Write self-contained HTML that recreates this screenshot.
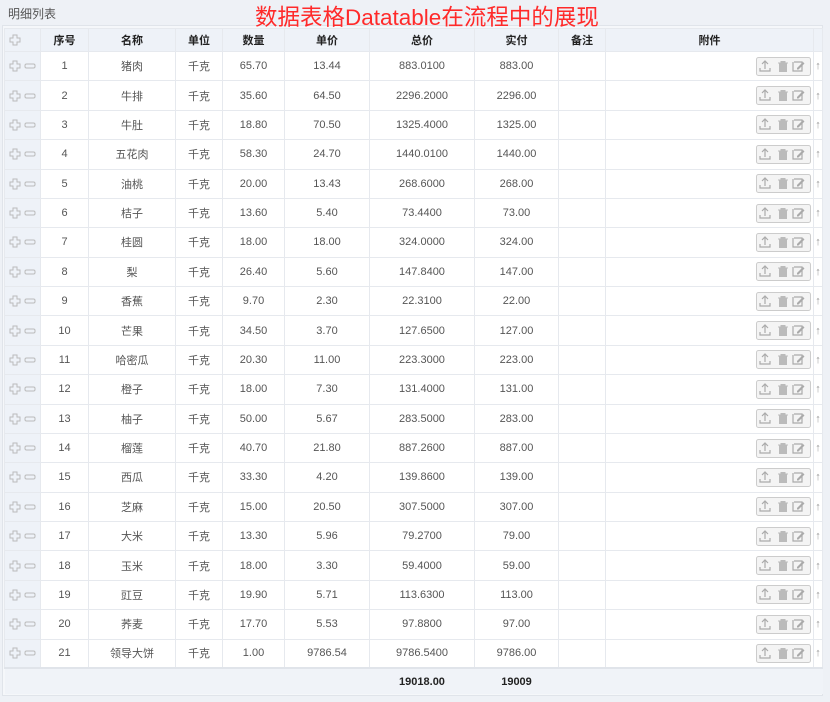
<!DOCTYPE html>
<html><head><meta charset="utf-8">
<style>
*{box-sizing:border-box;margin:0;padding:0}
body{width:830px;height:702px;background:#eef1f6;font-family:"Liberation Sans","Noto Sans CJK SC",sans-serif;position:relative;overflow:hidden}
.tt{position:absolute;left:8px;top:5px;font-size:12px;color:#555}
.red{position:absolute;left:255px;top:4px;font-size:22.5px;color:#ff2a2a;line-height:28px;z-index:2}
.wrap{position:absolute;left:2px;top:25px;width:821px;height:671px;background:#f5f7fa;border:1px solid #e0e4ea}
table{position:absolute;left:1px;top:2px;border-collapse:collapse;table-layout:fixed;width:818px}
td,th{border:1px solid #e6e9ee;text-align:center;font-size:11px;color:#555;white-space:nowrap;overflow:hidden}
th{height:23px;background:#eef2f8;color:#222;font-weight:bold}
tbody tr{height:29.38px;background:#fff}
td.c0{background:#eef2f8;text-align:left;padding-left:4px}
td.last{border-left:1px solid #e6e9ee;color:#999;font-size:11px}
tfoot td{height:26px;background:#f0f3f8;border:none;border-top:2px solid #e0e4ea;font-weight:bold;color:#222}
.pm{display:inline-block;vertical-align:middle}
.b{float:right;margin-right:2px}
</style></head><body>
<svg width="0" height="0" style="position:absolute">
<defs>
<g id="plus"><path d="M4 1h4v3h3v4h-3v3h-4v-3h-3v-4h3z" fill="none" stroke="#bbb" stroke-width="1"/></g>
<g id="minus"><rect x="1" y="4" width="10" height="4" rx="1.5" fill="none" stroke="#bbb"/></g>
<g id="btns">
<rect x="0.5" y="0.5" width="54" height="18" rx="2" fill="#f4f4f4" stroke="#ccc"/>
<path d="M9 4v8M6 7l3-3 3 3M4 11v3h10v-3" fill="none" stroke="#aaa" stroke-width="1.2"/>
<path d="M22 6h10M25 6v-1.5h4v1.5M23.5 7h7v7.5h-7z" fill="#bbb" stroke="#bbb" stroke-width="1"/>
<path d="M38 5h8v9h-9v-9" fill="none" stroke="#aaa" stroke-width="1.2"/>
<path d="M41 11l6-6 1.5 1.5-6 6h-1.5z" fill="#aaa"/>
</g>
</defs></svg>
<div class="tt">明细列表</div>
<div class="red">数据表格Datatable在流程中的展现</div>
<div class="wrap">
<table>
<colgroup><col style="width:36px"><col style="width:48px"><col style="width:87px"><col style="width:47px"><col style="width:62px"><col style="width:85px"><col style="width:105px"><col style="width:84px"><col style="width:47px"><col style="width:208px"><col style="width:9px"></colgroup>
<thead><tr><th style="text-align:left;padding-left:4px"><svg class="pm" width="12" height="12"><use href="#plus"/></svg></th><th>序号</th><th>名称</th><th>单位</th><th>数量</th><th>单价</th><th>总价</th><th>实付</th><th>备注</th><th>附件</th><th></th></tr></thead>
<tbody>
<tr><td class="c0"><svg class="pm" width="12" height="12"><use href="#plus"/></svg> <svg class="pm" width="12" height="12"><use href="#minus"/></svg></td><td>1</td><td>猪肉</td><td>千克</td><td>65.70</td><td>13.44</td><td>883.0100</td><td>883.00</td><td></td><td><svg class="b" width="55" height="19"><use href="#btns"/></svg></td><td class="last">↑</td></tr>
<tr><td class="c0"><svg class="pm" width="12" height="12"><use href="#plus"/></svg> <svg class="pm" width="12" height="12"><use href="#minus"/></svg></td><td>2</td><td>牛排</td><td>千克</td><td>35.60</td><td>64.50</td><td>2296.2000</td><td>2296.00</td><td></td><td><svg class="b" width="55" height="19"><use href="#btns"/></svg></td><td class="last">↑</td></tr>
<tr><td class="c0"><svg class="pm" width="12" height="12"><use href="#plus"/></svg> <svg class="pm" width="12" height="12"><use href="#minus"/></svg></td><td>3</td><td>牛肚</td><td>千克</td><td>18.80</td><td>70.50</td><td>1325.4000</td><td>1325.00</td><td></td><td><svg class="b" width="55" height="19"><use href="#btns"/></svg></td><td class="last">↑</td></tr>
<tr><td class="c0"><svg class="pm" width="12" height="12"><use href="#plus"/></svg> <svg class="pm" width="12" height="12"><use href="#minus"/></svg></td><td>4</td><td>五花肉</td><td>千克</td><td>58.30</td><td>24.70</td><td>1440.0100</td><td>1440.00</td><td></td><td><svg class="b" width="55" height="19"><use href="#btns"/></svg></td><td class="last">↑</td></tr>
<tr><td class="c0"><svg class="pm" width="12" height="12"><use href="#plus"/></svg> <svg class="pm" width="12" height="12"><use href="#minus"/></svg></td><td>5</td><td>油桃</td><td>千克</td><td>20.00</td><td>13.43</td><td>268.6000</td><td>268.00</td><td></td><td><svg class="b" width="55" height="19"><use href="#btns"/></svg></td><td class="last">↑</td></tr>
<tr><td class="c0"><svg class="pm" width="12" height="12"><use href="#plus"/></svg> <svg class="pm" width="12" height="12"><use href="#minus"/></svg></td><td>6</td><td>桔子</td><td>千克</td><td>13.60</td><td>5.40</td><td>73.4400</td><td>73.00</td><td></td><td><svg class="b" width="55" height="19"><use href="#btns"/></svg></td><td class="last">↑</td></tr>
<tr><td class="c0"><svg class="pm" width="12" height="12"><use href="#plus"/></svg> <svg class="pm" width="12" height="12"><use href="#minus"/></svg></td><td>7</td><td>桂圆</td><td>千克</td><td>18.00</td><td>18.00</td><td>324.0000</td><td>324.00</td><td></td><td><svg class="b" width="55" height="19"><use href="#btns"/></svg></td><td class="last">↑</td></tr>
<tr><td class="c0"><svg class="pm" width="12" height="12"><use href="#plus"/></svg> <svg class="pm" width="12" height="12"><use href="#minus"/></svg></td><td>8</td><td>梨</td><td>千克</td><td>26.40</td><td>5.60</td><td>147.8400</td><td>147.00</td><td></td><td><svg class="b" width="55" height="19"><use href="#btns"/></svg></td><td class="last">↑</td></tr>
<tr><td class="c0"><svg class="pm" width="12" height="12"><use href="#plus"/></svg> <svg class="pm" width="12" height="12"><use href="#minus"/></svg></td><td>9</td><td>香蕉</td><td>千克</td><td>9.70</td><td>2.30</td><td>22.3100</td><td>22.00</td><td></td><td><svg class="b" width="55" height="19"><use href="#btns"/></svg></td><td class="last">↑</td></tr>
<tr><td class="c0"><svg class="pm" width="12" height="12"><use href="#plus"/></svg> <svg class="pm" width="12" height="12"><use href="#minus"/></svg></td><td>10</td><td>芒果</td><td>千克</td><td>34.50</td><td>3.70</td><td>127.6500</td><td>127.00</td><td></td><td><svg class="b" width="55" height="19"><use href="#btns"/></svg></td><td class="last">↑</td></tr>
<tr><td class="c0"><svg class="pm" width="12" height="12"><use href="#plus"/></svg> <svg class="pm" width="12" height="12"><use href="#minus"/></svg></td><td>11</td><td>哈密瓜</td><td>千克</td><td>20.30</td><td>11.00</td><td>223.3000</td><td>223.00</td><td></td><td><svg class="b" width="55" height="19"><use href="#btns"/></svg></td><td class="last">↑</td></tr>
<tr><td class="c0"><svg class="pm" width="12" height="12"><use href="#plus"/></svg> <svg class="pm" width="12" height="12"><use href="#minus"/></svg></td><td>12</td><td>橙子</td><td>千克</td><td>18.00</td><td>7.30</td><td>131.4000</td><td>131.00</td><td></td><td><svg class="b" width="55" height="19"><use href="#btns"/></svg></td><td class="last">↑</td></tr>
<tr><td class="c0"><svg class="pm" width="12" height="12"><use href="#plus"/></svg> <svg class="pm" width="12" height="12"><use href="#minus"/></svg></td><td>13</td><td>柚子</td><td>千克</td><td>50.00</td><td>5.67</td><td>283.5000</td><td>283.00</td><td></td><td><svg class="b" width="55" height="19"><use href="#btns"/></svg></td><td class="last">↑</td></tr>
<tr><td class="c0"><svg class="pm" width="12" height="12"><use href="#plus"/></svg> <svg class="pm" width="12" height="12"><use href="#minus"/></svg></td><td>14</td><td>榴莲</td><td>千克</td><td>40.70</td><td>21.80</td><td>887.2600</td><td>887.00</td><td></td><td><svg class="b" width="55" height="19"><use href="#btns"/></svg></td><td class="last">↑</td></tr>
<tr><td class="c0"><svg class="pm" width="12" height="12"><use href="#plus"/></svg> <svg class="pm" width="12" height="12"><use href="#minus"/></svg></td><td>15</td><td>西瓜</td><td>千克</td><td>33.30</td><td>4.20</td><td>139.8600</td><td>139.00</td><td></td><td><svg class="b" width="55" height="19"><use href="#btns"/></svg></td><td class="last">↑</td></tr>
<tr><td class="c0"><svg class="pm" width="12" height="12"><use href="#plus"/></svg> <svg class="pm" width="12" height="12"><use href="#minus"/></svg></td><td>16</td><td>芝麻</td><td>千克</td><td>15.00</td><td>20.50</td><td>307.5000</td><td>307.00</td><td></td><td><svg class="b" width="55" height="19"><use href="#btns"/></svg></td><td class="last">↑</td></tr>
<tr><td class="c0"><svg class="pm" width="12" height="12"><use href="#plus"/></svg> <svg class="pm" width="12" height="12"><use href="#minus"/></svg></td><td>17</td><td>大米</td><td>千克</td><td>13.30</td><td>5.96</td><td>79.2700</td><td>79.00</td><td></td><td><svg class="b" width="55" height="19"><use href="#btns"/></svg></td><td class="last">↑</td></tr>
<tr><td class="c0"><svg class="pm" width="12" height="12"><use href="#plus"/></svg> <svg class="pm" width="12" height="12"><use href="#minus"/></svg></td><td>18</td><td>玉米</td><td>千克</td><td>18.00</td><td>3.30</td><td>59.4000</td><td>59.00</td><td></td><td><svg class="b" width="55" height="19"><use href="#btns"/></svg></td><td class="last">↑</td></tr>
<tr><td class="c0"><svg class="pm" width="12" height="12"><use href="#plus"/></svg> <svg class="pm" width="12" height="12"><use href="#minus"/></svg></td><td>19</td><td>豇豆</td><td>千克</td><td>19.90</td><td>5.71</td><td>113.6300</td><td>113.00</td><td></td><td><svg class="b" width="55" height="19"><use href="#btns"/></svg></td><td class="last">↑</td></tr>
<tr><td class="c0"><svg class="pm" width="12" height="12"><use href="#plus"/></svg> <svg class="pm" width="12" height="12"><use href="#minus"/></svg></td><td>20</td><td>荞麦</td><td>千克</td><td>17.70</td><td>5.53</td><td>97.8800</td><td>97.00</td><td></td><td><svg class="b" width="55" height="19"><use href="#btns"/></svg></td><td class="last">↑</td></tr>
<tr><td class="c0"><svg class="pm" width="12" height="12"><use href="#plus"/></svg> <svg class="pm" width="12" height="12"><use href="#minus"/></svg></td><td>21</td><td>领导大饼</td><td>千克</td><td>1.00</td><td>9786.54</td><td>9786.5400</td><td>9786.00</td><td></td><td><svg class="b" width="55" height="19"><use href="#btns"/></svg></td><td class="last">↑</td></tr>
</tbody>
<tfoot><tr><td></td><td></td><td></td><td></td><td></td><td></td><td>19018.00</td><td>19009</td><td></td><td></td><td></td></tr></tfoot>
</table>
</div>
</body></html>
